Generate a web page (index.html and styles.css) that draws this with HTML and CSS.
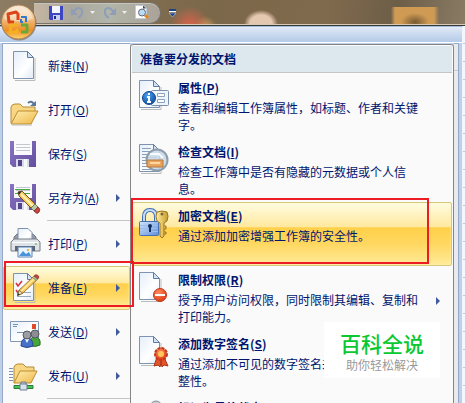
FILE: index.html
```html
<!DOCTYPE html>
<html lang="zh-CN">

<head>
    <meta charset="UTF-8">
    <meta name="viewport" content="width=device-width, initial-scale=1.0">
    <title>准备要分发的文档</title>
    <link rel="stylesheet" href="styles.css">
</head>

<body>
    <svg class="defs" aria-hidden="true">
        <defs>
            <linearGradient id="paper" x1="0" y1="0" x2="1" y2="1">
                <stop offset="0" stop-color="#e4eefa" />
                <stop offset=".6" stop-color="#fff" />
                <stop offset="1" stop-color="#dfe9f6" />
            </linearGradient>
            <linearGradient id="folder" x1="0" y1="0" x2="1" y2="1">
                <stop offset="0" stop-color="#ffeeb0" />
                <stop offset="1" stop-color="#edb749" />
            </linearGradient>
            <linearGradient id="purple" x1="0" y1="0" x2="1" y2="1">
                <stop offset="0" stop-color="#8a74c4" />
                <stop offset="1" stop-color="#64509f" />
            </linearGradient>
            <linearGradient id="lockblue" x1="0" y1="0" x2="1" y2="1">
                <stop offset="0" stop-color="#d3e6fc" />
                <stop offset="1" stop-color="#5d8edb" />
            </linearGradient>
            <linearGradient id="gold" x1="0" y1="0" x2="1" y2="0">
                <stop offset="0" stop-color="#fff0a0" />
                <stop offset="1" stop-color="#c99a2c" />
            </linearGradient>
            <radialGradient id="red" cx=".4" cy=".3" r=".8">
                <stop offset="0" stop-color="#ff8a5c" />
                <stop offset="1" stop-color="#d8330f" />
            </radialGradient>
            <radialGradient id="info" cx=".4" cy=".3" r=".8">
                <stop offset="0" stop-color="#4aa0f0" />
                <stop offset="1" stop-color="#0a4698" />
            </radialGradient>
            <linearGradient id="orb" x1="0" y1="0" x2="0" y2="1">
                <stop offset="0" stop-color="#f6e6cf" />
                <stop offset=".3" stop-color="#f3cf9f" />
                <stop offset=".5" stop-color="#eeb06a" />
                <stop offset=".75" stop-color="#ee8f22" />
                <stop offset="1" stop-color="#ffd470" />
            </linearGradient>
            <symbol id="page" viewBox="0 0 32 32">
                <path d="M3 31.5h20V9" fill="none" stroke="#bbb" />
                <path d="M1.500 2.500h14l6 6v21h-20z" fill="url(#paper)" stroke="#7d93ae" />
                <path d="M15.500 2.500v6h6z" fill="#d4e3f5" stroke="#607c9e" />
            </symbol>
            <symbol id="floppy" viewBox="0 0 32 32">
                <path d="M1 3h26v26H4l-3-3z" fill="url(#purple)" />
                <path d="M5 3h18v14H5z" fill="#fbfbfe" />
                <path d="M7 6.500h14M7 9.500h14M7 12.500h14" stroke="#c6c6d2" />
                <path d="M7 21h13v8H7z" fill="#d9dbe8" />
                <path d="M9 22h4v6H9z" fill="#55448c" />
                <path d="M15 21h3v8h-3z" fill="#f8f8fc" />
            </symbol>
            <symbol id="pencil" viewBox="0 0 32 32">
                <path d="M2 30l2-7L23 5l5 4L9 27z" fill="#f8c95c" stroke="#856020" />
                <path d="M6 25L25 7" stroke="#fff2b5" stroke-width="1.500" />
                <path d="M2 30l2-7 5 4z" fill="#f5dfb5" stroke="#6d5530" />
                <path d="M2 30l1-3 2 1.500z" fill="#222" />
                <path d="M22 6l2-2 5 4-2 2z" fill="#b5c6a0" stroke="#6c7c62" />
                <path d="M24 4q2-3 5-1t0 5z" fill="#c8443c" stroke="#8a3a35" />
            </symbol>
        </defs>
    </svg>

    <header class="titlebar">
        <div class="quick-access">
            <button class="tool" aria-label="保存">
                <svg width="14" height="14" viewBox="0 0 14 14">
                    <path d="M0 0h14v14H1l-1-1z" fill="#3d45c0" />
                    <path d="M3 0h8v7H3z" fill="#f2f4ff" />
                    <path d="M4 9h7v5H4z" fill="#c9cff0" />
                    <path d="M5 10h2v3H5z" fill="#20288a" />
                </svg>
            </button>
            <button class="tool undo" aria-label="撤消">
                <svg width="13" height="14" viewBox="0 0 13 14">
                    <path d="M2 6Q8-1 11 4q1 5-4 8" fill="none" stroke="#8e9db8" stroke-width="2" />
                    <path d="M0 2v7h7z" fill="#8e9db8" />
                </svg>
                <svg class="drop" width="5" height="4" viewBox="0 0 5 4">
                    <path d="M0 0h5L2.500 3z" fill="#eee" />
                </svg>
            </button>
            <button class="tool redo" aria-label="恢复">
                <svg width="13" height="14" viewBox="0 0 13 14">
                    <path d="M11 6Q5-1 2 4q-1 5 4 8" fill="none" stroke="#8e9db8" stroke-width="2" />
                    <path d="M13 2v7H6z" fill="#8e9db8" />
                </svg>
                <svg class="drop" width="5" height="4" viewBox="0 0 5 4">
                    <path d="M0 0h5L2.500 3z" fill="#eee" />
                </svg>
            </button>
            <button class="tool" aria-label="打印预览">
                <svg width="14" height="15" viewBox="0 0 14 15">
                    <path d="M.5.5h8l3 3v10H.5z" fill="#fff" stroke="#c3ccd8" />
                    <path d="M8 .5v3h3z" fill="#345" />
                    <path d="M10 10l3 3" stroke="#e08a20" stroke-width="3" />
                    <circle cx="7" cy="7.500" r="3.500" fill="#b9dcf5" stroke="#667" />
                </svg>
            </button>
        </div>
        <button class="tool customize" aria-label="自定义快速访问工具栏">
            <svg width="7" height="8" viewBox="0 0 7 8">
                <path d="M0 0h7v2H0z" fill="#1d4486" />
                <path d="M0 2h7v1H0z" fill="#fff" />
                <path d="M0 4h7L3.500 8z" fill="#1d4486" stroke="#dce6f5" stroke-width=".5" />
            </svg>
        </button>
    </header>

    <button class="office-button" aria-label="Office 按钮">
        <svg width="38" height="40" viewBox="0 0 38 40">
            <circle cx="19" cy="21" r="17.500" fill="#6b4a26" opacity=".5" />
            <circle cx="18.500" cy="20" r="17" fill="url(#orb)" stroke="#a9825a" />
            <path d="M4 17q3-12 14.500-12T33 17q-14 5-29 0z" fill="#fff" opacity=".35" />
            <g fill="none" stroke-linejoin="round">
                <path d="M14 20H9l-1-8 8-2 2 2v6" stroke="#dc4317" stroke-width="3" />
                <path d="M21 15h5v5M21 17v3h2" stroke="#3379ca" stroke-width="2" />
                <path d="M17 23h-6l-1 7h7v-3" stroke="#f5b020" stroke-width="3" />
                <path d="M21 23h6v7h-6" stroke="#6aa83a" stroke-width="3" />
            </g>
        </svg>
    </button>

    <main class="office-menu">
        <nav class="commands">
            <button class="command">
                <svg class="icon" viewBox="0 0 32 32"><use href="#page" x="3" y="-1" width="32" height="32" /></svg>
                <span class="label">新建(<u>N</u>)</span>
            </button>
            <button class="command">
                <svg class="icon" viewBox="0 0 32 32">
                    <path d="M2 29V13q1-3 4-3h5l3 3h12v5" fill="#f7d784" stroke="#b98b36" />
                    <path d="M2 30l7-13h20l-7 13z" fill="url(#folder)" stroke="#c08c2c" />
                    <path d="M3 31h20" stroke="#bbb" />
                    <path d="M19 9q3-3 6 1" fill="none" stroke="#5d7896" stroke-width="2" />
                    <path d="M27 7v5h-6z" fill="#5d7896" />
                </svg>
                <span class="label">打开(<u>O</u>)</span>
            </button>
            <button class="command">
                <svg class="icon" viewBox="0 0 32 32"><use href="#floppy" width="32" height="32" /></svg>
                <span class="label">保存(<u>S</u>)</span>
            </button>
            <button class="command">
                <svg class="icon" viewBox="0 0 32 32">
                    <use href="#floppy" y="-1" width="32" height="32" />
                    <path d="M6 7.500h15M6 11.500h15" stroke="#3fae3f" stroke-width="1" />
                    <path d="M9 10l4-1 16 16-4 4L10 14z" fill="#f8c95c" stroke="#72551f" />
                    <path d="M12 12l14 14" stroke="#fff2b5" stroke-width="2" />
                    <path d="M9 10l4-1-3 4z" fill="#333" />
                    <path d="M22 26l4-4 3 3-4 4z" fill="#bcc9a5" stroke="#6c7c62" />
                    <path d="M25 29l4-4q3 2 1 5t-5-1z" fill="#c8443c" stroke="#8a3a35" />
                </svg>
                <span class="label">另存为(<u>A</u>)</span>
                <span class="arrow"></span>
            </button>
            <hr class="separator">
            <button class="command">
                <svg class="icon" viewBox="0 0 32 32">
                    <path d="M5 21V9l3-3h16l3 3v12z" fill="#969ba5" stroke="#747b87" />
                    <path d="M9 14V.5h10l4 4V14z" fill="url(#paper)" stroke="#7e92ad" />
                    <path d="M2 14l3-3h23l3 3v9H2z" fill="#dfe2e7" stroke="#777e89" />
                    <path d="M3 14.500h26" stroke="#fff" />
                    <path d="M6 18h20v5H6z" fill="#60666f" />
                    <path d="M9 19h14v10H9z" fill="#e9f4ff" stroke="#5b84b5" />
                    <path d="M10 28l4-5 3 3 3-2 2 4z" fill="#4a93d8" />
                    <circle cx="19" cy="22" r="1" fill="#e6a020" />
                    <path d="M26 16h2" stroke="#4ab33c" />
                </svg>
                <span class="label">打印(<u>P</u>)</span>
                <span class="arrow"></span>
            </button>
            <button class="command selected">
                <svg class="icon" viewBox="0 0 32 32">
                    <use href="#page" x="3" y="-1" width="32" height="32" />
                    <path d="M7 11l2 3 4-5M7 18l2 3 4-5" fill="none" stroke="#d8303c" stroke-width="1.500" />
                    <path d="M8 24.500h14M14 20.500h8" stroke="#98a9c0" />
                    <use href="#pencil" x="7" y="1" width="24" height="24" />
                </svg>
                <span class="label">准备(<u>E</u>)</span>
                <span class="arrow"></span>
                <span class="callout"></span>
            </button>
            <button class="command">
                <svg class="icon" viewBox="0 0 32 32">
                    <path d="M1.500 5.500h28v20h-28z" fill="url(#paper)" stroke="#8298b3" />
                    <path d="M4 8.500h5M4 10.500h4M8 16.500h8" stroke="#7891b2" />
                    <path d="M23 8h4v5h-4z" fill="#df4b28" />
                    <path d="M20 29q0-8 6-8t5 8q-5 3-11 0z" fill="#48a53a" stroke="#276e20" />
                    <circle cx="26" cy="18" r="4" fill="#8c8e94" stroke="#555a62" />
                    <path d="M12 30q0-8 6-8t6 8q-6 3-12 0z" fill="#4770c8" stroke="#28458c" />
                    <path d="M16 23l2 4 2-4z" fill="#fff" />
                    <circle cx="18" cy="19" r="4" fill="#9b9da2" stroke="#555a62" />
                </svg>
                <span class="label">发送(<u>D</u>)</span>
                <span class="arrow"></span>
            </button>
            <button class="command">
                <svg class="icon" viewBox="0 0 32 32">
                    <path d="M0 8.500h4M0 11.500h4M0 14.500h4M0 17.500h4M0 20.500h4" stroke="#7894b4" />
                    <path d="M5 23V7q1-3 4-3h5l3 3h8v5" fill="#f7d784" stroke="#b98b36" />
                    <path d="M5 23l6-12h17l-6 12z" fill="url(#folder)" stroke="#c08c2c" />
                    <path d="M12 22h5v5h-5z" fill="#b9c5d2" stroke="#6c7e90" />
                    <path d="M5 25.500h19v3H5z" fill="#4dbf55" stroke="#287b35" />
                    <path d="M11 24h7v6h-7z" fill="#d8e2ea" stroke="#6c7e90" />
                </svg>
                <span class="label">发布(<u>U</u>)</span>
                <span class="arrow"></span>
            </button>
            <hr class="separator">
        </nav>

        <section class="submenu">
            <h2 class="submenu-title">准备要分发的文档</h2>
            <button class="entry">
                <svg class="icon" viewBox="0 0 32 32">
                    <use href="#page" y="-2" width="32" height="32" />
                    <rect x="13.500" y="10.500" width="17" height="15" rx="1" fill="#f0f5fc" stroke="#7890ae" />
                    <path d="M19.500 13.500h7v3h-7zM19.500 19.500h7v3h-7z" fill="#fff" stroke="#8da2bc" />
                    <circle cx="11" cy="18" r="6.500" fill="url(#info)" stroke="#164a8f" />
                    <path d="M11 13v2M9 17h2v5M9 22h4" stroke="#fff" stroke-width="2" fill="none" />
                </svg>
                <span class="text">
                    <strong class="name">属性(<u>P</u>)</strong>
                    <span class="description">查看和编辑工作簿属性，如标题、作者和关键字。</span>
                </span>
            </button>
            <button class="entry">
                <svg class="icon" viewBox="0 0 32 32">
                    <use href="#page" y="-2" width="32" height="32" />
                    <path d="M4 4.500h9M4 7.500h9M4 10.500h15M4 13.500h15M4 16.500h15M4 19.500h15M4 22.500h15M4 25.500h15" stroke="#8aa1be" />
                    <circle cx="19" cy="16" r="10.500" fill="#c7d8e9" fill-opacity=".85" stroke="#909eab" stroke-width="2" />
                    <path d="M12 10h9l4 4" stroke="#f8fbff" stroke-width="2" fill="none" />
                    <path d="M9 16h16v7H9z" fill="#e9a45d" stroke="#b8783a" />
                    <path d="M12 18h10v2H12z" fill="#ffd5a0" />
                </svg>
                <span class="text">
                    <strong class="name">检查文档(<u>I</u>)</strong>
                    <span class="description">检查工作簿中是否有隐藏的元数据或个人信息。</span>
                </span>
            </button>
            <button class="entry selected">
                <svg class="icon" viewBox="0 0 32 32">
                    <path d="M6 14V9q0-7 6-7t6 7v5" fill="none" stroke="#3f6db4" stroke-width="4" />
                    <path d="M6 14V9q0-7 6-7t6 7v5" fill="none" stroke="#c5dbf7" stroke-width="2" />
                    <rect x="1.500" y="13.500" width="19" height="14" rx="1" fill="url(#lockblue)" stroke="#4470b6" />
                    <path d="M2 17.500h18M2 20.500h18M2 23.500h18" stroke="#9cbdeb" />
                    <circle cx="12" cy="18" r="2" fill="#12305f" />
                    <path d="M12 18v6" stroke="#12305f" stroke-width="2" />
                    <path d="M19 4q5-2 10 0 2 4 0 9l-3 2v13l-2 2-2-2V15l-3-2q-2-5 0-9z" fill="url(#gold)" stroke="#9b7520" />
                    <path d="M26 18h2v3h-2M26 24h2v2h-2" fill="#e0b94d" stroke="#9b7520" />
                    <circle cx="24" cy="6" r="1.500" fill="#79663b" />
                </svg>
                <span class="text">
                    <strong class="name">加密文档(<u>E</u>)</strong>
                    <span class="description">通过添加加密增强工作簿的安全性。</span>
                </span>
                <span class="callout"></span>
            </button>
            <button class="entry">
                <svg class="icon" viewBox="0 0 32 32">
                    <use href="#page" y="-2" width="32" height="32" />
                    <circle cx="22" cy="23" r="6.500" fill="url(#red)" stroke="#c23917" />
                    <path d="M17 23h10" stroke="#fff" stroke-width="2" />
                </svg>
                <span class="text">
                    <strong class="name">限制权限(<u>R</u>)</strong>
                    <span class="description">授予用户访问权限，同时限制其编辑、复制和打印能力。</span>
                </span>
                <span class="arrow"></span>
            </button>
            <button class="entry">
                <svg class="icon" viewBox="0 0 32 32">
                    <use href="#page" y="-2" width="32" height="32" />
                    <path d="M19 21l-3 9 4-1 2 2 2-9zM26 21l4 9-4-1-2 2-2-9z" fill="#e5532a" stroke="#a93516" />
                    <circle cx="23" cy="18" r="6" fill="url(#red)" stroke="#c23917" stroke-width="2" stroke-dasharray="3 1" />
                    <circle cx="23" cy="18" r="3" fill="#ffc65b" />
                </svg>
                <span class="text">
                    <strong class="name">添加数字签名(<u>S</u>)</strong>
                    <span class="description">通过添加不可见的数字签名来确保工作簿的完整性。</span>
                </span>
            </button>
            <button class="entry">
                <svg class="icon" viewBox="0 0 32 32">
                    <circle cx="18" cy="7" r="6" fill="#c9ced6" stroke="#858d99" />
                    <path d="M18 3l6 3-4 5z" fill="#d9603c" />
                </svg>
                <span class="text">
                    <strong class="name">标记为最终状态(<u>F</u>)</strong>
                </span>
            </button>
        </section>
        <aside class="recent"></aside>
    </main>
    <div class="sheet"></div>

    <div class="watermark">
        <strong class="brand">百科全说</strong>
        <span class="slogan">助你轻松解决</span>
    </div>
</body>

</html>
```
FILE: styles.css
```css
* {
    box-sizing: border-box;
}

body {
    margin: 0;
    height: 100vh;
    overflow: hidden;
    display: grid;
    grid-template-columns: 1fr 2px;
    grid-template-rows: 26px 1fr;
    position: relative;
    font: 12px/16px "Noto Sans CJK SC", sans-serif;
    color: #00156e;
}

button {
    margin: 0;
    padding: 0;
    border: 0;
    background: none;
    font: inherit;
    color: inherit;
    text-align: left;
}

.defs {
    position: absolute;
    width: 0;
    height: 0;
}

/* title bar */

.titlebar {
    grid-column: 1 / 3;
    display: flex;
    align-items: center;
    gap: 8px;
    padding: 1px 0 1px 34px;
    border-bottom: 1px solid #3a3a36;
    background:
        linear-gradient(#d5cbb8, #d5cbb8) bottom / 100% 1px no-repeat,
        radial-gradient(circle at 190px 26px, rgba(208, 100, 75, 0.9) 4px, transparent 20px),
        radial-gradient(circle at 205px 28px, #d8a862, transparent 12px),
        radial-gradient(ellipse 17px 14px at 261px 24px, #e5c8b0 65%, transparent),
        radial-gradient(ellipse 14px 9px at 415px 22px, #775a32, transparent),
        linear-gradient(90deg, transparent 391px, #cf9b54 395px, #cf9b54 434px, transparent 439px) 0 7px / 100% 18px no-repeat,
        linear-gradient(100deg, #8c7c63, #7b6749 45%, #806a4d 70%, #6d5e48 85%, #8a7b64);
}

.quick-access {
    display: flex;
    align-items: center;
    gap: 8px;
    height: 22px;
    padding: 0 11px 0 15px;
    border: 1px solid #77736b;
    border-left: 0;
    border-radius: 0 11px 11px 0;
    background: linear-gradient(90deg, #c5b6a2, #aaa79e 30%, #b2b5a9 60%, #aaa298);
    box-shadow: inset 0 1px #c9c4b8;
}

.tool {
    display: flex;
    align-items: center;
}

.drop {
    margin-left: 6px;
}

.office-button {
    position: absolute;
    top: 2px;
    left: 0;
}

.office-button svg {
    display: block;
}

/* menu frame */

.office-menu {
    display: flex;
    min-height: 0;
    overflow: hidden;
    padding: 16px 3px 0 2px;
    border-top: 1px solid #a5bad6;
    border-right: 1px solid #f2f6fc;
    background: linear-gradient(#e4edf9, #cddcf0 6px, #b5cbe8 15px, #fff 15px, #fff 16px, #bfd0e8 16px);
}

.commands {
    flex: 0 0 128px;
    border: 1px solid #94a9c8;
    border-right: 0;
    border-bottom: 0;
    background: #fafafa;
}

.command {
    position: relative;
    display: flex;
    align-items: center;
    width: 100%;
    height: 44px;
    padding: 0 10px 0 6px;
    gap: 7px;
}

.icon {
    flex: none;
    width: 32px;
    height: 32px;
}

.label {
    flex: 1;
}

.arrow {
    border: 4px solid transparent;
    border-left: 4px solid #405a9b;
    border-right: 0;
}

.separator {
    margin: 0 0 1px 44px;
    border: 0;
    border-top: 1px solid #c5c5c5;
}

.selected {
    border: 1px solid #d8c67f;
    border-radius: 2px;
    background: linear-gradient(#fffce0, #ffe9a0 38%, #ffd04a 40%, #ffd75f 65%, #ffeb9a);
    box-shadow: inset 0 0 2px #fff7b8;
}

.command.selected {
    padding: 0 9px 0 5px;
}

/* red frames over the chosen entries */

.callout {
    position: absolute;
    z-index: 2;
    border: 2px solid #ed1c24;
    pointer-events: none;
}

.command .callout {
    top: -6px;
    bottom: 2px;
    left: 0;
    right: -5px;
}

.entry .callout {
    top: -5px;
    bottom: 1px;
    left: -2px;
    right: 22px;
}

/* submenu */

.submenu {
    flex: 1;
    align-self: flex-start;
    margin-top: 1px;
    padding: 1px;
    border: 1px solid #858585;
    border-radius: 3px 3px 0 0;
    background: #fafafa;
}

.submenu-title {
    margin: 0 0 1px;
    padding: 0 8px;
    border-bottom: 1px solid #c5c5c5;
    background: #dde7ee;
    font-size: 12px;
    line-height: 26px;
}

.entry {
    position: relative;
    display: flex;
    width: 100%;
    height: 64px;
    padding: 6px 12px 0 6px;
    gap: 8px;
}

.entry.selected {
    padding: 5px 11px 0 5px;
}

.text {
    flex: 0 1 246px;
}

.name,
.description {
    display: block;
}

.description {
    margin-top: 3px;
    line-height: 17px;
}

.entry .arrow {
    align-self: center;
    margin-left: auto;
}

.recent {
    flex: 0 0 5px;
    border-top: 1px solid #94a9c8;
    border-right: 1px solid #94a9c8;
    background: linear-gradient(#e9eaee 26px, #c5cad2 26px, #c5cad2 27px, #e9eaee 27px);
}

.sheet {
    background: repeating-linear-gradient(#f4f8fd, #f4f8fd 17px, #b8cbe2 17px, #b8cbe2 18px);
}

.watermark {
    position: absolute;
    top: 322px;
    right: 25px;
    width: 116px;
    height: 56px;
    padding-top: 9px;
    background: #fff;
    text-align: center;
}

.brand,
.slogan {
    display: block;
}

.brand {
    color: #0ac832;
    font-size: 21px;
    font-weight: 500;
    line-height: 25px;
}

.slogan {
    color: #999;
    line-height: 18px;
}
```
